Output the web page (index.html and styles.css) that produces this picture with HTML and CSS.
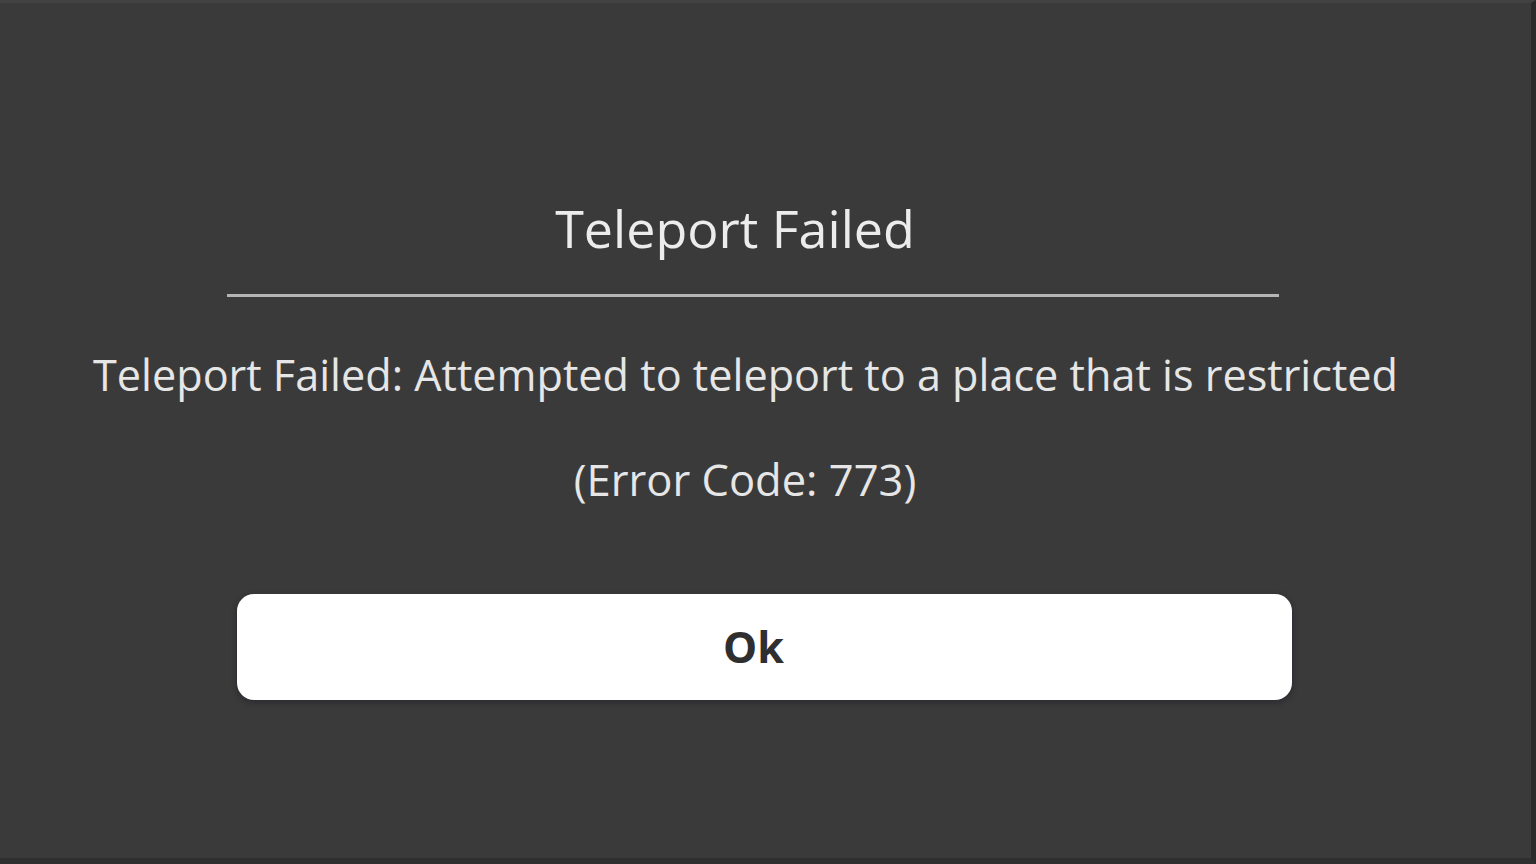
FILE: index.html
```html
<!DOCTYPE html>
<html lang="en">
<head>
<meta charset="utf-8">
<title>Teleport Failed</title>
<link rel="stylesheet" href="styles.css">
</head>
<body>
<div class="screen">
  <div class="dialog">
    <h1 class="title">Teleport Failed</h1>
    <div class="rule"></div>
    <p class="message">Teleport Failed: Attempted to teleport to a place that is restricted</p>
    <p class="code">(Error Code: 773)</p>
    <button class="ok-button" type="button"><span class="ok-label">Ok</span></button>
  </div>
</div>
</body>
</html>
```

FILE: styles.css
```css
html, body {
  margin: 0;
  padding: 0;
  width: 100%;
  height: 100%;
  background: #3a3a3a;
  overflow: hidden;
}

.screen {
  box-sizing: border-box;
  width: 1536px;
  height: 864px;
  background: #3a3a3a;
  border-top: 3px solid #424242;
  border-right: 5px solid #2a2a2a;
  border-bottom: 6px solid #2f2f2f;
  font-family: "Open Sans", "Noto Sans", sans-serif;
  color: #e6e6e6;
}

.dialog {
  display: flex;
  flex-direction: column;
  align-items: center;
  padding-top: 195px;
}

.title {
  margin: 0 61px 0 0;
  font-size: 52px;
  line-height: 60px;
  font-weight: 400;
  color: #ececec;
}

.rule {
  width: 1052px;
  height: 3px;
  margin: 36px 25px 0 0;
  background: #b5b5b5;
}

.message {
  margin: 52px 40px 0 0;
  font-size: 43.2px;
  line-height: 52px;
  white-space: nowrap;
}

.code {
  margin: 53px 41px 0 0;
  font-size: 43.5px;
  line-height: 52px;
}

.ok-button {
  width: 1055px;
  height: 106px;
  margin: 88px 2px 0 0;
  padding: 0 22px 0 0;
  border: none;
  border-radius: 17px;
  background: #ffffff;
  box-shadow: 0 2px 6px rgba(20, 20, 40, 0.45);
  font-family: "Open Sans", "Noto Sans", sans-serif;
  font-size: 43px;
  font-weight: 700;
  color: #2f2f2f;
  line-height: 52px;
}
```
